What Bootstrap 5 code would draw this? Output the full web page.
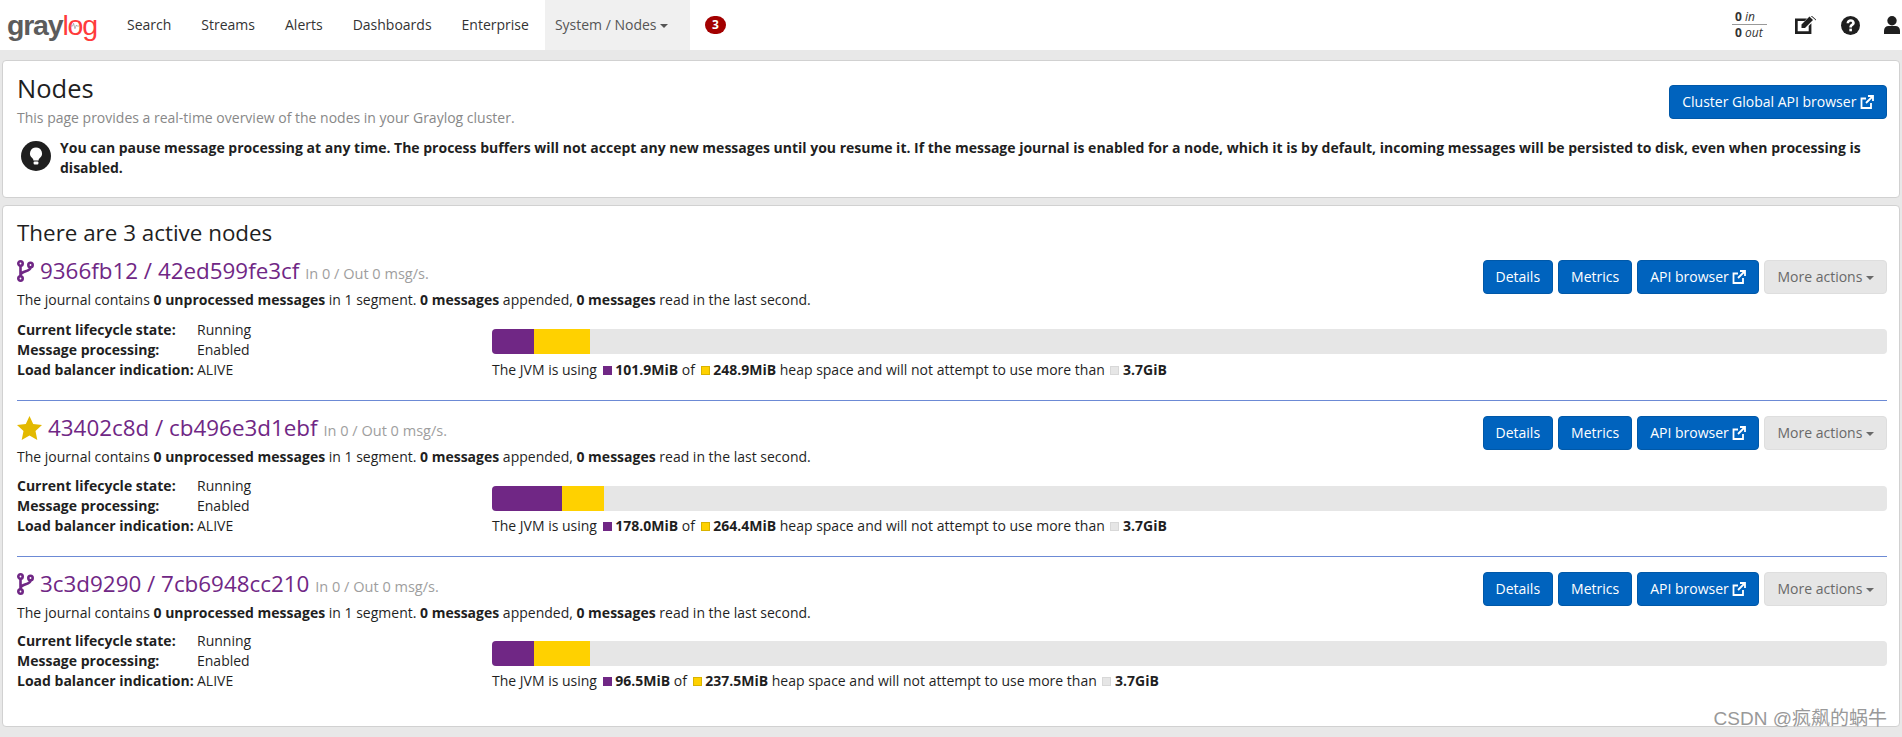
<!DOCTYPE html>
<html lang="en">
<head>
  <meta charset="UTF-8" />
  <title>Graylog - Nodes</title>
  <link href="https://cdn.jsdelivr.net/npm/bootstrap@5.3.0/dist/css/bootstrap.min.css" rel="stylesheet" />
  <style>
    body {
      font-family: "Open Sans", sans-serif;
      font-size: 14px;
      background-color: #e8e8e8;
      color: #1f1f1f;
      height: 737px;
      overflow: hidden;
    }
    .top-bar {
      height: 50px;
      background: #fff;
    }
    .brand {
      position: relative;
      width: 112px;
      padding-left: 7px;
      font-family: "Liberation Sans", sans-serif;
      font-size: 28.5px;
      font-weight: 700;
      letter-spacing: -1.2px;
      line-height: 44px;
      color: #5c5c5c;
    }
    .brand span { color: #ff3b3b; font-weight: 400; }
    .brand svg { position: absolute; left: 70px; top: 19px; }
    .top-link {
      padding: 0 15px;
      line-height: 50px;
      color: #333;
      text-decoration: none;
    }
    .top-link.on {
      background: #f0f0f0;
      color: #555;
      padding: 0 10px;
      margin-left: 1px;
      width: 145px;
    }
    .caret {
      display: inline-block;
      border-top: 4px solid;
      border-left: 4px solid transparent;
      border-right: 4px solid transparent;
      vertical-align: middle;
    }
    .alert-count {
      width: 21px;
      height: 18px;
      margin-left: 15px;
      border-radius: 10px;
      background: #a30000;
      color: #fff;
      font-size: 12px;
      font-weight: 700;
      line-height: 18px;
      text-align: center;
    }
    .through {
      width: 35px;
      margin-right: 28px;
      margin-top: -1px;
      font-size: 12px;
      line-height: 15px;
      color: #333;
    }
    .through div { padding-left: 3px; }
    .through div:first-child { border-bottom: 1px solid #999; }
    .page-box {
      margin: 10px 2px 0;
      background: #fff;
      border: 1px solid #d1d1d1;
      border-radius: 4px;
      padding: 13px 12px 0 14px;
    }
    .intro-box { height: 138px; }
    .nodes-box { height: 522px; margin-top: 7px; padding-top: 12px; }
    .page-title { font-size: 25.5px; font-weight: 400; line-height: 29px; margin: 0; color: #1f1f1f; }
    .page-sub { color: #888; margin: 5px 0 0; line-height: 20px; }
    .hint { font-weight: 700; color: #1f1f1f; line-height: 20px; margin: 10px 0 0 4px; gap: 9px; }
    .hint svg { flex: 0 0 30px; margin-top: 3px; }
    .cluster-slot { padding-top: 11px; }
    .gl-btn {
      background: #0063be;
      border: 1px solid #0058a8;
      border-radius: 4px;
      color: #fff;
      font-size: 14px;
      line-height: 20px;
      padding: 6px 12px;
      white-space: nowrap;
    }
    .gl-btn.grey {
      background: #e6e6e6;
      border-color: #dedede;
      color: #696969;
    }
    .gl-btn svg { vertical-align: -2px; }
    .btn-group-gap { gap: 5px; margin-top: 3px; }
    .box-heading { font-size: 22.4px; font-weight: 400; line-height: 30px; margin: 0; }
    .node-item { height: 156px; padding-top: 12px; }
    .node-item:first-child { height: 152px; padding-top: 8px; }
    .node-item:first-child .btn-group-gap { margin-top: 4px; }
    .node-item + .node-item { border-top: 1px solid #6c8ad5; }
    .node-name { font-size: 22.4px; color: #702785; line-height: 30px; gap: 6px; }
    .node-name small { font-size: 14.56px; line-height: 1; color: #9e9e9e; }
    .journal { line-height: 20px; margin-top: 4px; }
    .facts-row { margin-top: 9px; }
    .node-item:first-child .facts-row { margin-top: 10px; }
    .node-item:first-child .heap-wrap { padding-top: 9px; }
    .node-item:first-child .heap-note { margin-top: 6px; }
    .node-item:last-child .facts-row { margin-top: 8px; }
    .facts { width: 475px; flex: none; line-height: 20px; }
    .facts dt { float: left; clear: left; width: 180px; font-weight: 700; margin: 0; }
    .facts dd { margin: 0 0 0 180px; }
    .heap-wrap { padding-top: 10px; }
    .heap-bar {
      height: 25px;
      background: #e6e6e6;
      border-radius: 4px;
    }
    .heap-used { background: #702785; }
    .heap-comm { background: #ffd100; }
    .swatch {
      display: inline-block;
      width: 9px;
      height: 9px;
      margin-left: 2px;
      border: 1px solid transparent;
    }
    .swatch.heap-comm { border-color: #d9b300; }
    .swatch.heap-max { background: #e6e6e6; border-color: #d8d8d8; }
    .heap-note { line-height: 20px; margin-top: 5px; }
    .watermark {
      position: absolute;
      right: 15px;
      top: 707px;
      font-family: "Liberation Sans", "Noto Sans CJK SC", sans-serif;
      font-size: 19px;
      line-height: 24px;
      color: #999;
    }
  </style>
</head>
<body>

  <!-- top navigation -->
  <nav class="top-bar d-flex align-items-center">
    <div class="brand">gray<span>log</span><svg width="9" height="8" viewBox="0 0 10 8" fill="none" stroke="#999" stroke-width="0.800"><path d="M0 4h3l1-3 1.500 6L7 3l.5 1H10"/></svg></div>
    <a class="top-link" href="#">Search</a>
    <a class="top-link" href="#">Streams</a>
    <a class="top-link" href="#">Alerts</a>
    <a class="top-link" href="#">Dashboards</a>
    <a class="top-link" href="#">Enterprise</a>
    <a class="top-link on" href="#">System / Nodes <span class="caret"></span></a>
    <div class="alert-count">3</div>
    <div class="ms-auto d-flex align-items-center">
      <div class="through">
        <div><b>0</b> <i>in</i></div>
        <div><b>0</b> <i>out</i></div>
      </div>
      <svg width="21" height="18" viewBox="0 0 21 18" fill="#1f1f1f"><path d="M0 2.500h12l-2.500 2.500H2.700v10.300h11V10l2.700-2.700V18H0zM6.500 8.500 14.500.5l3.500 3.500-8 8H6.500zM15.800 0h1.200L21 3.500v1L19.300 3z"/></svg>
      <svg style="margin-left:25px" width="19" height="19" viewBox="0 0 20 20"><circle cx="10" cy="10" r="10" fill="#1f1f1f"/><path d="M5.800 7.500C6 4.800 7.900 3.400 10.200 3.400c2.500 0 4.300 1.600 4.300 3.800 0 3-3 3-3 5H8.800c0-3.600 2.900-3.600 2.900-5 0-.7-.6-1.200-1.500-1.200-.9 0-1.500.5-1.700 1.500z" fill="#fff"/><rect x="8.800" y="13.300" width="2.700" height="2.800" fill="#fff"/></svg>
      <svg style="margin-left:24px;margin-right:2px" width="16" height="18" viewBox="0 0 16 18" fill="#1f1f1f"><circle cx="8" cy="4.700" r="4.700"/><path d="M0 18v-3.500C0 11.800 2 10 4.500 10h7c2.500 0 4.500 1.800 4.500 4.500V18z"/></svg>
    </div>
  </nav>

  <section class="page-box intro-box">
    <div class="d-flex justify-content-between">
      <div>
        <h1 class="page-title">Nodes</h1>
        <p class="page-sub">This page provides a real-time overview of the nodes in your Graylog cluster.</p>
      </div>
      <div class="cluster-slot">
        <button class="gl-btn">Cluster Global API browser <svg width="14" height="14" viewBox="0 0 14 14" fill="none" stroke="#fff" stroke-width="1.800"><path d="M11 8v5H1.500V3.500H6M8 1h5v5M13 1 6 8"/></svg></button>
      </div>
    </div>
    <div class="hint d-flex">
      <svg width="30" height="30" viewBox="0 0 30 30"><circle cx="15" cy="15" r="15" fill="#1f1f1f"/><path d="M15 6.500a6 6 0 0 0-3.600 10.800c.7.600 1 1.200 1 2.200h5.200c0-1 .3-1.600 1-2.200A6 6 0 0 0 15 6.500z" fill="#fff"/><rect x="12.600" y="20.500" width="4.800" height="3" rx="1" fill="#fff"/></svg>
      <div>You can pause message processing at any time. The process buffers will not accept any new messages until you resume it. If the message journal is enabled for a node, which it is by default, incoming messages will be persisted to disk, even when processing is disabled.</div>
    </div>
  </section>

  <section class="page-box nodes-box">
    <h2 class="box-heading">There are 3 active nodes</h2>
    <div id="node-list"></div>
  </section>

  <div class="watermark">CSDN @疯飙的蜗牛</div>

  <script>
    const nodes = [
      { name: "9366fb12 / 42ed599fe3cf", star: false, used: "101.9MiB", comm: "248.9MiB", max: "3.7GiB", a: 3.0, b: 4.0 },
      { name: "43402c8d / cb496e3d1ebf", star: true, used: "178.0MiB", comm: "264.4MiB", max: "3.7GiB", a: 5.0, b: 3.0 },
      { name: "3c3d9290 / 7cb6948cc210", star: false, used: "96.5MiB", comm: "237.5MiB", max: "3.7GiB", a: 3.0, b: 4.0 }
    ];

    const forkIcon = '<svg width="17" height="22" viewBox="0 0 17 22" fill="none" stroke="#702785" stroke-width="2.600"><circle cx="3.500" cy="3.500" r="2.200"/><circle cx="3.500" cy="18.500" r="2.200"/><circle cx="13.500" cy="5" r="2.200"/><path d="M3.500 6v10M13.500 7.500c0 4.500-10 3-10 8"/></svg>';
    const starIcon = '<svg width="25" height="24" viewBox="0 0 25 24" fill="#e3b900"><path d="M12.500 0l3.700 8 8.800 1-6.500 6 1.800 9-7.800-4.500L4.700 24l1.800-9L0 9l8.800-1z"/></svg>';
    const extIcon = '<svg width="14" height="14" viewBox="0 0 14 14" fill="none" stroke="#fff" stroke-width="1.800"><path d="M11 8v5H1.500V3.500H6M8 1h5v5M13 1 6 8"/></svg>';

    document.getElementById("node-list").innerHTML = nodes.map(n => `
      <div class="node-item">
        <div class="d-flex justify-content-between">
          <div>
            <div class="node-name d-flex align-items-center">${n.star ? starIcon : forkIcon}<span>${n.name} <small>In 0 / Out 0 msg/s.</small></span></div>
            <div class="journal">The journal contains <b>0 unprocessed messages</b> in 1 segment. <b>0 messages</b> appended, <b>0 messages</b> read in the last second.</div>
          </div>
          <div class="d-flex btn-group-gap align-items-start">
            <button class="gl-btn">Details</button>
            <button class="gl-btn">Metrics</button>
            <button class="gl-btn">API browser ${extIcon}</button>
            <button class="gl-btn grey">More actions <span class="caret"></span></button>
          </div>
        </div>
        <div class="d-flex facts-row">
          <dl class="facts mb-0">
            <dt>Current lifecycle state:</dt><dd>Running</dd>
            <dt>Message processing:</dt><dd>Enabled</dd>
            <dt>Load balancer indication:</dt><dd>ALIVE</dd>
          </dl>
          <div class="flex-grow-1 heap-wrap">
            <div class="heap-bar d-flex overflow-hidden">
              <div class="heap-used" style="width:${n.a}%"></div>
              <div class="heap-comm" style="width:${n.b}%"></div>
            </div>
            <div class="heap-note">The JVM is using <span class="swatch heap-used"></span> <b>${n.used}</b> of <span class="swatch heap-comm"></span> <b>${n.comm}</b> heap space and will not attempt to use more than <span class="swatch heap-max"></span> <b>${n.max}</b></div>
          </div>
        </div>
      </div>`).join("");
  </script>
  <script src="https://cdn.jsdelivr.net/npm/bootstrap@5.3.0/dist/js/bootstrap.bundle.min.js"></script>
</body>
</html>
